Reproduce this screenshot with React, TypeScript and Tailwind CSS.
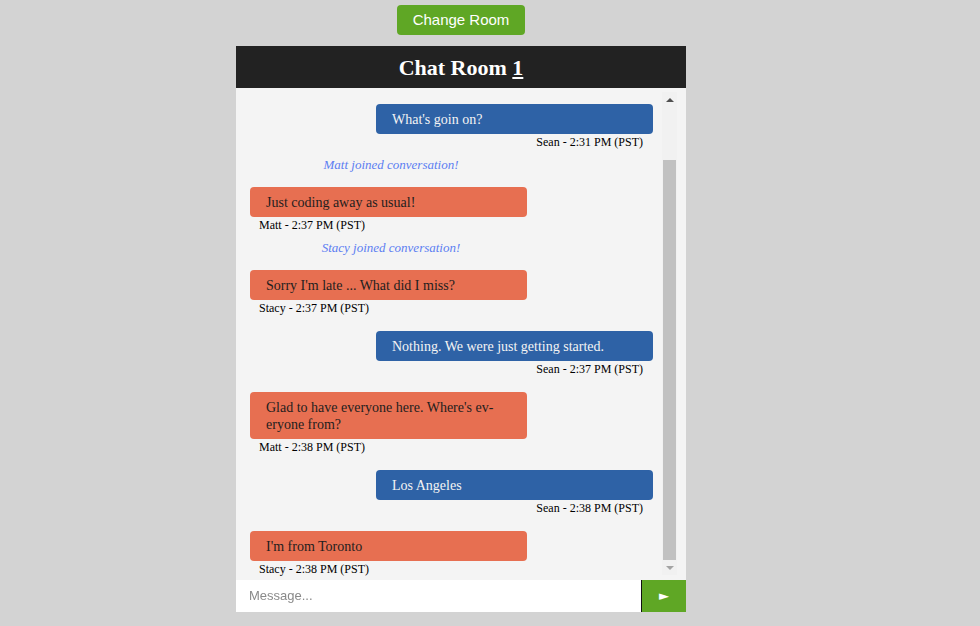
import { ReactNode } from 'react';

type Msg =
  | { kind: 'mine'; text: ReactNode; meta: string }
  | { kind: 'theirs'; text: ReactNode; meta: string }
  | { kind: 'system'; text: string };

const messages: Msg[] = [
  { kind: 'mine', text: "What's goin on?", meta: 'Sean - 2:31 PM (PST)' },
  { kind: 'system', text: 'Matt joined conversation!' },
  { kind: 'theirs', text: 'Just coding away as usual!', meta: 'Matt - 2:37 PM (PST)' },
  { kind: 'system', text: 'Stacy joined conversation!' },
  { kind: 'theirs', text: "Sorry I'm late ... What did I miss?", meta: 'Stacy - 2:37 PM (PST)' },
  { kind: 'mine', text: 'Nothing. We were just getting started.', meta: 'Sean - 2:37 PM (PST)' },
  {
    kind: 'theirs',
    text: (
      <>
        Glad to have everyone here. Where's ev-
        <br />
        eryone from?
      </>
    ),
    meta: 'Matt - 2:38 PM (PST)',
  },
  { kind: 'mine', text: 'Los Angeles', meta: 'Sean - 2:38 PM (PST)' },
  { kind: 'theirs', text: "I'm from Toronto", meta: 'Stacy - 2:38 PM (PST)' },
];

function Bubble({ msg, first }: { msg: Msg; first: boolean }) {
  if (msg.kind === 'system') {
    return (
      <div className="w-[282px] mt-[6px] text-center italic text-[13px] leading-4 text-[#5c7ef2]">
        {msg.text}
      </div>
    );
  }
  const mine = msg.kind === 'mine';
  return (
    <div className={`flex flex-col ${first ? '' : 'mt-[14px]'} ${mine ? 'items-end' : 'items-start'}`}>
      <div
        className={`w-[277px] rounded-[4px] px-4 py-[6.5px] text-[14px] leading-[17px] ${
          mine ? 'bg-[#2e62a6] text-[#f4f4f4]' : 'bg-[#e76f51] text-[#1e1e1e]'
        }`}
      >
        {msg.text}
      </div>
      <div className={`text-[12px] leading-[17px] text-black ${mine ? 'pr-[10px]' : 'pl-[9px]'}`}>{msg.meta}</div>
    </div>
  );
}

export default function App() {
  return (
    <div className="w-[922px] min-h-[626px] flex flex-col items-center pt-[5px] font-['Liberation_Serif',serif]">
      <div className="fixed inset-0 -z-10 bg-[#d3d3d3]" />
      <button className="w-[128px] h-[30px] rounded-[4px] bg-[#5fa725] text-white text-[15px] font-['Liberation_Sans',Arial,sans-serif]">
        Change Room
      </button>

      <div className="w-[450px] mt-[11px] flex flex-col">
        <div className="h-[42px] bg-[#222222] flex items-center justify-center text-white font-bold text-[22px]">
          Chat Room&nbsp;<span className="underline underline-offset-2">1</span>
        </div>

        <div className="h-[492px] bg-[#f4f4f4] flex">
          <div className="flex-1 overflow-hidden pl-[14px] pr-[9px] pt-4">
            {messages.map((m, i) => (
              <Bubble key={i} msg={m} first={i === 0} />
            ))}
          </div>
          <div className="w-[15px] mt-1 mb-[5px] mr-[9px] bg-[#f1f1f1] flex flex-col items-center">
            <div className="h-[15px] flex items-center justify-center">
              <div className="w-0 h-0 border-x-[4px] border-x-transparent border-b-[4px] border-b-[#505050]" />
            </div>
            <div className="flex-1 w-full flex flex-col px-[1px]">
              <div className="h-[53px]" />
              <div className="flex-1 bg-[#c1c1c1]" />
            </div>
            <div className="h-[15px] flex items-center justify-center">
              <div className="w-0 h-0 border-x-[4px] border-x-transparent border-t-[4px] border-t-[#a3a3a3]" />
            </div>
          </div>
        </div>

        <div className="h-[32px] flex">
          <input
            placeholder="Message..."
            className="flex-1 bg-white px-[13px] text-[13px] outline-none placeholder:text-[#8a8a8a] font-['Liberation_Sans',Arial,sans-serif]"
          />
          <button className="w-[45px] bg-[#5fa725] border-l border-[#111] text-white text-[13px] font-['DejaVu_Sans',sans-serif]">
            ►
          </button>
        </div>
      </div>
    </div>
  );
}
